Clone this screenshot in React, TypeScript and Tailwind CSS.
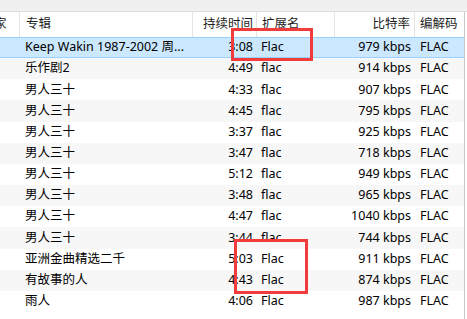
import React from "react";

// 列表行数据
interface Track {
  album: string;
  time: string;
  ext: string;
  rate: string;
  codec: string;
}

const tracks: Track[] = [
  { album: "Keep Wakin 1987-2002 周...", time: "3:08", ext: "Flac", rate: "979 kbps", codec: "FLAC" },
  { album: "乐作剧2", time: "4:49", ext: "flac", rate: "914 kbps", codec: "FLAC" },
  { album: "男人三十", time: "4:33", ext: "flac", rate: "907 kbps", codec: "FLAC" },
  { album: "男人三十", time: "4:45", ext: "flac", rate: "795 kbps", codec: "FLAC" },
  { album: "男人三十", time: "3:37", ext: "flac", rate: "925 kbps", codec: "FLAC" },
  { album: "男人三十", time: "3:47", ext: "flac", rate: "718 kbps", codec: "FLAC" },
  { album: "男人三十", time: "5:12", ext: "flac", rate: "949 kbps", codec: "FLAC" },
  { album: "男人三十", time: "3:48", ext: "flac", rate: "965 kbps", codec: "FLAC" },
  { album: "男人三十", time: "4:47", ext: "flac", rate: "1040 kbps", codec: "FLAC" },
  { album: "男人三十", time: "3:44", ext: "flac", rate: "744 kbps", codec: "FLAC" },
  { album: "亚洲金曲精选二千", time: "5:03", ext: "Flac", rate: "911 kbps", codec: "FLAC" },
  { album: "有故事的人", time: "4:43", ext: "Flac", rate: "874 kbps", codec: "FLAC" },
  { album: "雨人", time: "4:06", ext: "Flac", rate: "987 kbps", codec: "FLAC" },
];

const cols = "grid grid-cols-[20px_173px_64px_78px_80px_50px]";

export default function App() {
  return (
    <div
      className="relative w-[467px] h-[319px] overflow-hidden bg-white text-[12.5px] text-black"
      style={{ fontFamily: '"Noto Sans", "Noto Sans CJK SC", sans-serif' }}
    >
      {/* bande du haut */}
      <div className="h-[12px] bg-[#f0f0f0] border-b border-[#dcdcdc]" />

      <div className="w-[465px] border-r border-[#c8c8c8] h-full">
        {/* en-têtes */}
        <div className={`${cols} h-[25px] items-center text-[#1e1e1e]`}>
          <div className="h-full border-r border-[#e5e5e5] overflow-hidden flex items-center">
            <span className="-ml-[6px]">家</span>
          </div>
          <div className="h-full border-r border-[#e5e5e5] flex items-center pl-[6px]">专辑</div>
          <div className="h-full border-r border-[#e5e5e5] flex items-center justify-end pr-[3px] whitespace-nowrap">
            持续时间
          </div>
          <div className="h-full border-r border-[#e5e5e5] flex items-center pl-[5px]">扩展名</div>
          <div className="h-full border-r border-[#e5e5e5] flex items-center justify-end pr-[4px]">比特率</div>
          <div className="h-full flex items-center pl-[5px] whitespace-nowrap">编解码</div>
        </div>

        {/* lignes */}
        {tracks.map((t, i) => (
          <div
            key={i}
            className={`${cols} h-[21.17px] items-center whitespace-nowrap ${
              i === 0
                ? "bg-[#cce8ff] border-y border-[#99d1ff]"
                : i % 2 === 1
                ? "bg-[#f7f7f7]"
                : "bg-white"
            }`}
          >
            <div />
            <div className="pl-[5px] overflow-hidden">{t.album}</div>
            <div className="text-right pr-[4px]">{t.time}</div>
            <div className="pl-[4px]">{t.ext}</div>
            <div className="text-right pr-[4px]">{t.rate}</div>
            <div className="pl-[5px]">{t.codec}</div>
          </div>
        ))}
      </div>

      {/* cadres rouges */}
      <div className="absolute left-[231px] top-[28px] w-[82px] h-[33px] border-[3px] border-[#f23c3c]" />
      <div className="absolute left-[234px] top-[239px] w-[74px] h-[55px] border-[3px] border-[#f23c3c]" />
    </div>
  );
}
